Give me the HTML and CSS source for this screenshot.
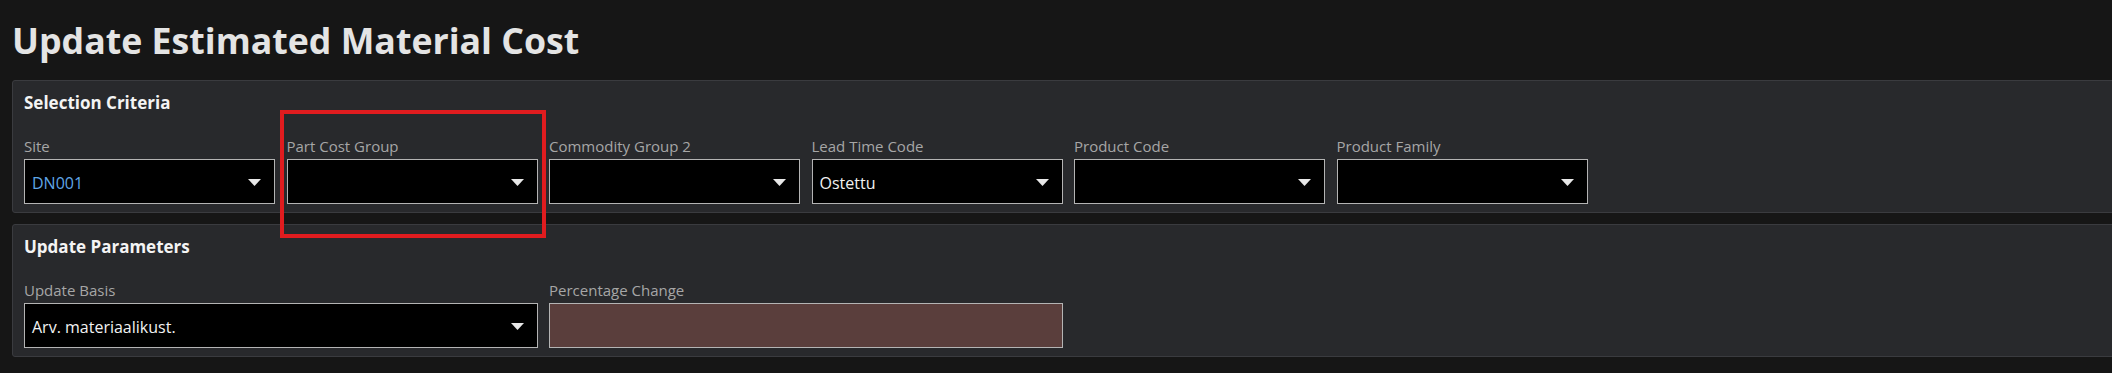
FILE: index.html
```html
<!DOCTYPE html>
<html>
<head>
<meta charset="utf-8">
<link rel="stylesheet" href="styles.css">
</head>
<body>
<div class="page">
  <h1 class="title">Update Estimated Material Cost</h1>

  <section class="panel">
    <h2 class="panel-title">Selection Criteria</h2>
    <div class="fields">
      <div class="field">
        <label class="label">Site</label>
        <div class="select"><span class="value value-link">DN001</span><svg class="caret" viewBox="0 0 13 7"><polygon points="0,0 13,0 6.5,7"/></svg></div>
      </div>
      <div class="field">
        <label class="label">Part Cost Group</label>
        <div class="select"><span class="value"></span><svg class="caret" viewBox="0 0 13 7"><polygon points="0,0 13,0 6.5,7"/></svg></div>
      </div>
      <div class="field">
        <label class="label">Commodity Group 2</label>
        <div class="select"><span class="value"></span><svg class="caret" viewBox="0 0 13 7"><polygon points="0,0 13,0 6.5,7"/></svg></div>
      </div>
      <div class="field">
        <label class="label">Lead Time Code</label>
        <div class="select"><span class="value">Ostettu</span><svg class="caret" viewBox="0 0 13 7"><polygon points="0,0 13,0 6.5,7"/></svg></div>
      </div>
      <div class="field">
        <label class="label">Product Code</label>
        <div class="select"><span class="value"></span><svg class="caret" viewBox="0 0 13 7"><polygon points="0,0 13,0 6.5,7"/></svg></div>
      </div>
      <div class="field">
        <label class="label">Product Family</label>
        <div class="select"><span class="value"></span><svg class="caret" viewBox="0 0 13 7"><polygon points="0,0 13,0 6.5,7"/></svg></div>
      </div>
    </div>
  </section>

  <section class="panel">
    <h2 class="panel-title">Update Parameters</h2>
    <div class="fields">
      <div class="field span-2">
        <label class="label">Update Basis</label>
        <div class="select"><span class="value">Arv. materiaalikust.</span><svg class="caret" viewBox="0 0 13 7"><polygon points="0,0 13,0 6.5,7"/></svg></div>
      </div>
      <div class="field span-2">
        <label class="label">Percentage Change</label>
        <div class="input-required"></div>
      </div>
    </div>
  </section>

  <div class="highlight"></div>
</div>
</body>
</html>
```

FILE: styles.css
```css
html, body {
  margin: 0;
  padding: 0;
  background: #161616;
  overflow: hidden;
}

.page {
  position: relative;
  padding: 16px 0 0 12px;
  font-family: "Open Sans", "Noto Sans", sans-serif;
  width: 2140px;
}

.title {
  margin: 0 0 16px 0;
  font-size: 35.7px;
  line-height: 48px;
  font-weight: 700;
  color: #e4e4e4;
}

.panel {
  background: #28292c;
  border: 1px solid #3a3b3f;
  border-radius: 3px;
  padding: 10px 11px 8px 11px;
  margin-bottom: 11px;
}

.panel-title {
  margin: 0 0 21px 0;
  font-size: 17px;
  line-height: 24px;
  font-weight: 700;
  color: #f4f4f4;
}

.fields {
  display: grid;
  grid-template-columns: repeat(6, 251px);
  column-gap: 11.5px;
}

.field {
  display: flex;
  flex-direction: column;
}

.span-2 {
  grid-column: span 2;
}

.label {
  font-size: 15px;
  line-height: 20px;
  color: #a6a6a6;
  margin-bottom: 3px;
}

.select {
  height: 45px;
  box-sizing: border-box;
  background: #000;
  border: 1px solid #b4b4b4;
  display: flex;
  align-items: center;
  justify-content: space-between;
  padding: 2px 13px 0 7px;
}

.value {
  font-size: 16px;
  color: #f2f2f2;
}

.value-link {
  color: #5fa6e6;
}

.caret {
  width: 13px;
  height: 7px;
  fill: #e8e8e8;
}

.input-required {
  height: 45px;
  box-sizing: border-box;
  background: #5a3e3c;
  border: 1px solid #b4b4b4;
}

.highlight {
  position: absolute;
  left: 280px;
  top: 110px;
  width: 266px;
  height: 128px;
  box-sizing: border-box;
  border: 4px solid #e01c1f;
}
```
